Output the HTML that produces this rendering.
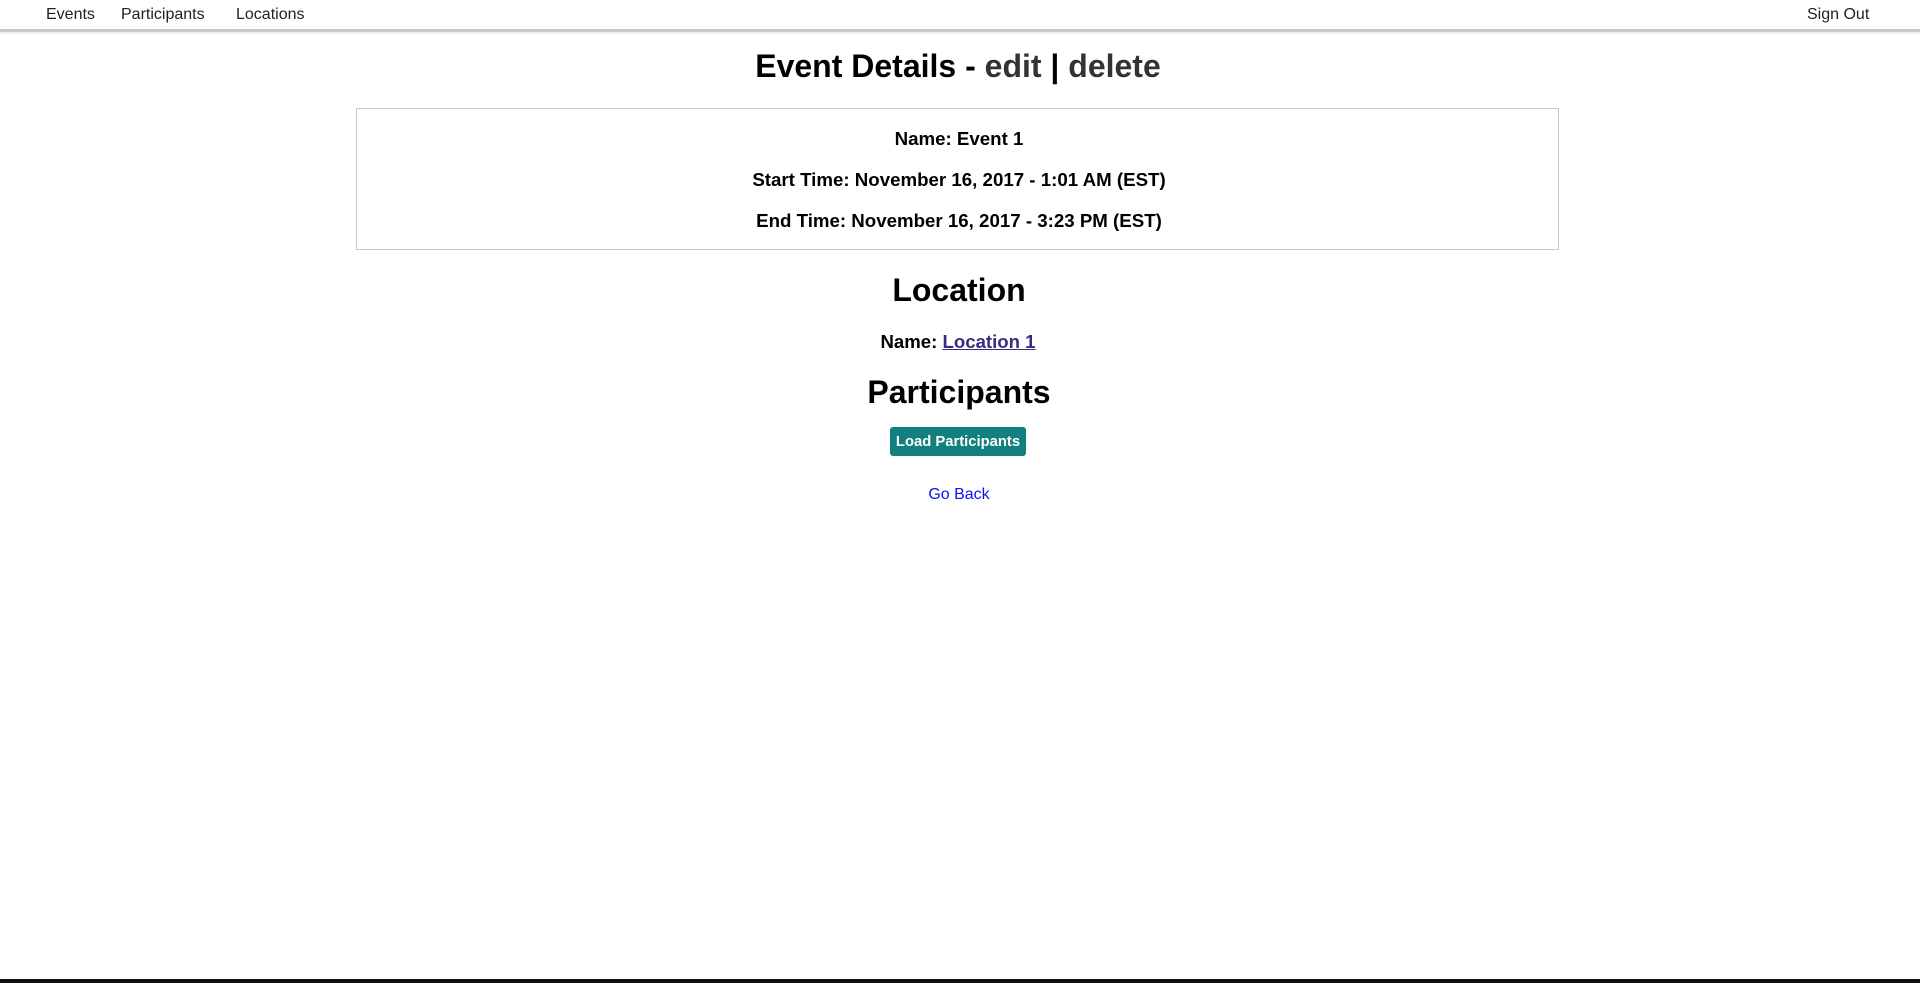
<!DOCTYPE html>
<html><head><style>
body{margin:0;width:1920px;height:983px;position:relative;background:#fff;font-family:"Liberation Sans",Arial,sans-serif;overflow:hidden}
.nav{position:absolute;left:0;top:0;width:1920px;height:29px;border-bottom:3px solid #c8c8c8;box-shadow:0 1px 2px #e4e4e4}
.n{position:absolute;top:6px;font-size:16px;color:#222}
.c{position:absolute;left:0;width:1920px;text-align:center;font-weight:bold;color:#000}
</style></head><body>
<div class="nav">
<span class="n" style="left:46px">Events</span>
<span class="n" style="left:121px">Participants</span>
<span class="n" style="left:236px">Locations</span>
<span class="n" style="left:1807px">Sign Out</span>
</div>
<div class="c" style="top:48px;font-size:32px;left:-2px">Event Details - <span style="color:#333">edit</span> | <span style="color:#333">delete</span></div>
<div style="position:absolute;left:356px;top:108px;width:1201px;height:140px;border:1px solid #c8c8c8"></div>
<div class="c" style="top:128px;font-size:18.7px;left:-1px">Name: Event 1</div>
<div class="c" style="top:169px;font-size:18.7px;left:-1px">Start Time: November 16, 2017 - 1:01 AM (EST)</div>
<div class="c" style="top:210px;font-size:18.7px;left:-1px">End Time: November 16, 2017 - 3:23 PM (EST)</div>
<div class="c" style="top:272px;font-size:32px;left:-1px">Location</div>
<div class="c" style="top:331px;font-size:18.6px;left:-2px">Name: <span style="color:#3c2a80;text-decoration:underline">Location 1</span></div>
<div class="c" style="top:374px;font-size:32px;left:-1px">Participants</div>
<div style="position:absolute;left:890px;top:427px;width:136px;height:29px;background:#138080;border-radius:3px;color:#fff;font-size:14.8px;font-weight:bold;text-align:center;line-height:30px">Load Participants</div>
<div class="c" style="top:486px;font-size:16px;font-weight:normal;color:#1010ee;left:-1px">Go Back</div>
<div style="position:absolute;left:0;top:979px;width:1920px;height:4px;background:#111"></div>
</body></html>
